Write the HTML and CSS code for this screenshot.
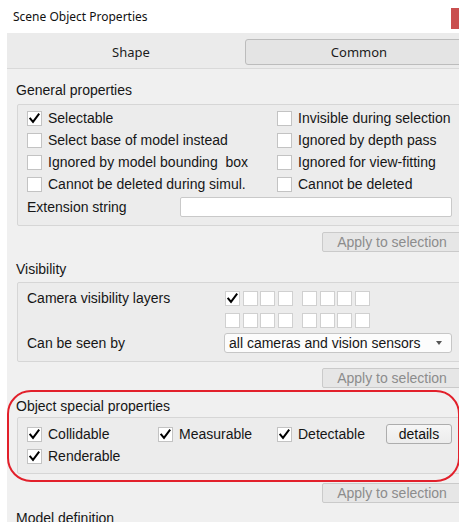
FILE: index.html
```html
<!DOCTYPE html>
<html>
<head>
<meta charset="utf-8">
<title>Scene Object Properties</title>
<link rel="stylesheet" href="styles.css">
</head>
<body>
<div class="window">
  <div class="titlebar">
    <span class="title">Scene Object Properties</span>
    <span class="close"></span>
  </div>
  <div class="client">
    <div class="tabs">
      <div class="tab">Shape</div>
      <div class="tab tab-btn">Common</div>
    </div>

    <div class="panel">
      <!-- General properties -->
      <div class="section-label sl-general">General properties</div>
      <div class="group group-general">
        <div class="flag-grid">
          <div class="cb"><span class="box"><svg viewBox="0 0 13 13" class="tick"><path d="M2.3 6.6 L5 9.8 L10.6 2.4"/></svg></span><span>Selectable</span></div>
          <div class="cb"><span class="box"></span><span>Invisible during selection</span></div>
          <div class="cb"><span class="box"></span><span>Select base of model instead</span></div>
          <div class="cb"><span class="box"></span><span>Ignored by depth pass</span></div>
          <div class="cb"><span class="box"></span><span>Ignored by model bounding&nbsp; box</span></div>
          <div class="cb"><span class="box"></span><span>Ignored for view-fitting</span></div>
          <div class="cb"><span class="box"></span><span>Cannot be deleted during simul.</span></div>
          <div class="cb"><span class="box"></span><span>Cannot be deleted</span></div>
        </div>
        <div class="ext-row">
          <span>Extension string</span>
          <span class="textfield"></span>
        </div>
      </div>
      <div class="apply ap-general">Apply to selection</div>

      <!-- Visibility -->
      <div class="section-label sl-visibility">Visibility</div>
      <div class="group group-visibility">
        <div class="vis-row">
          <span>Camera visibility layers</span>
          <div class="layers">
            <span class="layer"><svg viewBox="0 0 13 13" class="tick"><path d="M2.3 6.6 L5 9.8 L10.6 2.4"/></svg></span>
            <span class="layer"></span>
            <span class="layer"></span>
            <span class="layer"></span>
            <span class="layer layer-split"></span>
            <span class="layer"></span>
            <span class="layer"></span>
            <span class="layer"></span>
          </div>
        </div>
        <div class="vis-row">
          <span></span>
          <div class="layers">
            <span class="layer"></span>
            <span class="layer"></span>
            <span class="layer"></span>
            <span class="layer"></span>
            <span class="layer layer-split"></span>
            <span class="layer"></span>
            <span class="layer"></span>
            <span class="layer"></span>
          </div>
        </div>
        <div class="vis-row vis-row-combo">
          <span>Can be seen by</span>
          <div class="combo"><span>all cameras and vision sensors</span><span class="arrow"></span></div>
        </div>
      </div>
      <div class="apply ap-visibility">Apply to selection</div>

      <!-- Object special properties -->
      <div class="section-label sl-special">Object special properties</div>
      <div class="group group-special">
        <div class="special-grid">
          <div class="cb"><span class="box"><svg viewBox="0 0 13 13" class="tick"><path d="M2.3 6.6 L5 9.8 L10.6 2.4"/></svg></span><span>Collidable</span></div>
          <div class="cb"><span class="box"><svg viewBox="0 0 13 13" class="tick"><path d="M2.3 6.6 L5 9.8 L10.6 2.4"/></svg></span><span>Measurable</span></div>
          <div class="cb"><span class="box"><svg viewBox="0 0 13 13" class="tick"><path d="M2.3 6.6 L5 9.8 L10.6 2.4"/></svg></span><span>Detectable</span></div>
          <div class="btn-cell"><span class="details">details</span></div>
          <div class="cb"><span class="box"><svg viewBox="0 0 13 13" class="tick"><path d="M2.3 6.6 L5 9.8 L10.6 2.4"/></svg></span><span>Renderable</span></div>
        </div>
      </div>
      <div class="apply ap-special">Apply to selection</div>

      <!-- Model definition -->
      <div class="section-label sl-model">Model definition</div>
    </div>
  </div>
  <div class="highlight"></div>
</div>
</body>
</html>
```
FILE: styles.css
```css
* {
  box-sizing: border-box;
}

html,
body {
  margin: 0;
  padding: 0;
}

body {
  width: 459px;
  height: 522px;
  overflow: hidden;
  background: #ffffff;
  font-family: "Liberation Sans", Arial, sans-serif;
  font-size: 14px;
  color: #161616;
}

.window {
  position: relative;
  width: 473px;
}

/* title bar */
.titlebar {
  height: 33px;
  display: flex;
  align-items: flex-start;
}

.title {
  margin: 9px 0 0 13px;
  font-family: "Noto Sans", sans-serif;
  font-size: 12px;
  line-height: 16px;
  color: #111111;
}

.close {
  margin-left: auto;
  margin-top: 8px;
  width: 22px;
  height: 21px;
  background: #c94f4f;
}

/* dialog body */
.client {
  margin-left: 7px;
  height: 489px;
  background: #f0f0f0;
}

.tabs {
  display: flex;
  height: 36px;
  padding-left: 10px;
  background: #ebebeb;
  border-bottom: 1px solid #d9d9d9;
}

.tab {
  width: 228px;
  height: 26px;
  margin-top: 6px;
  display: flex;
  align-items: center;
  justify-content: center;
  font-family: "Noto Sans", sans-serif;
  font-size: 13px;
  color: #1b1b1b;
}

.tab-btn {
  background: #e4e4e4;
  border: 1px solid #bcbcbc;
  border-radius: 3px;
}

.panel {
  display: flex;
  flex-direction: column;
  align-items: flex-start;
  padding: 13px 0 0 10px;
}

.section-label {
  height: 16px;
  line-height: 16px;
  margin-left: -1px;
  white-space: nowrap;
}

.sl-general {
  margin-bottom: 6px;
}

.sl-visibility {
  margin-top: 9px;
  margin-bottom: 5px;
}

.sl-special {
  margin-top: 10px;
  margin-bottom: 3px;
}

.sl-model {
  margin-top: 7px;
}

.group {
  width: 446px;
  border: 1px solid #d6d6d6;
  border-radius: 2px;
  background: #ececec;
  padding: 0 9px;
}

/* checkboxes */
.cb {
  display: flex;
  align-items: center;
  gap: 6px;
  height: 22px;
  white-space: nowrap;
}

.box,
.layer {
  width: 15px;
  height: 15px;
  flex: none;
  border: 1px solid #c3c3c3;
  background: #ffffff;
  display: flex;
  align-items: center;
  justify-content: center;
}

.tick {
  width: 13px;
  height: 13px;
  fill: none;
  stroke: #000000;
  stroke-width: 2;
  stroke-linecap: square;
  stroke-linejoin: miter;
}

/* general properties */
.group-general {
  padding-top: 2px;
  padding-bottom: 6px;
}

.flag-grid {
  display: grid;
  grid-template-columns: 250px 1fr;
  grid-auto-rows: 22px;
}

.ext-row {
  display: grid;
  grid-template-columns: 153px 1fr;
  align-items: center;
  height: 24px;
}

.textfield {
  width: 272px;
  height: 20px;
  background: #ffffff;
  border: 1px solid #c9c9c9;
  border-radius: 2px;
}

/* disabled apply buttons */
.apply {
  margin-left: 305px;
  width: 140px;
  height: 20px;
  line-height: 18px;
  text-align: center;
  color: #8c8c8c;
  background: #e6e6e6;
  border: 1px solid #cacaca;
  border-radius: 2px;
  white-space: nowrap;
}

.ap-general,
.ap-visibility {
  margin-top: 6px;
}

.ap-special {
  margin-top: 9px;
}

/* visibility */
.group-visibility {
  padding-top: 4px;
  padding-bottom: 6px;
}

.vis-row {
  display: grid;
  grid-template-columns: 197px 1fr;
  align-items: center;
  height: 22px;
  white-space: nowrap;
}

.vis-row-combo {
  height: 24px;
}

.layers {
  display: flex;
  gap: 2.5px;
  padding-left: 1px;
}

.layer {
  border-color: #d0d0d0;
}

.layer-split {
  margin-left: 7px;
}

.combo {
  width: 228px;
  height: 20px;
  display: flex;
  align-items: center;
  justify-content: space-between;
  padding-left: 4px;
  background: #fcfcfc;
  border: 1px solid #c6c6c6;
  border-radius: 3px;
}

.arrow {
  margin-right: 9px;
  width: 0;
  height: 0;
  border-left: 3.5px solid transparent;
  border-right: 3.5px solid transparent;
  border-top: 4px solid #555555;
}

/* object special properties */
.group-special {
  padding-top: 5px;
  padding-bottom: 6px;
}

.special-grid {
  display: grid;
  grid-template-columns: 131px 119px 109px auto;
  grid-auto-rows: 22px;
}

.btn-cell {
  display: flex;
  align-items: center;
}

.details {
  width: 66px;
  height: 20px;
  line-height: 18px;
  text-align: center;
  background: linear-gradient(#f6f6f6, #ececec);
  border: 1px solid #adadad;
  border-radius: 3px;
  color: #111111;
}

/* red annotation ring drawn over the special-properties block */
.highlight {
  position: absolute;
  left: 7px;
  top: 390px;
  width: 453px;
  height: 92px;
  border: 2.5px solid #e2202b;
  border-radius: 24px;
  pointer-events: none;
}
```
